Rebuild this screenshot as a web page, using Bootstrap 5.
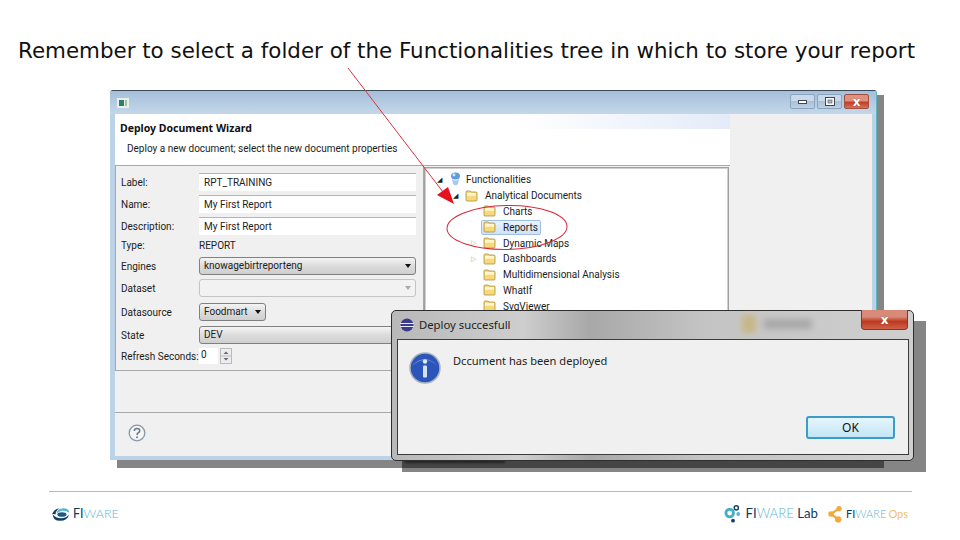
<!DOCTYPE html>
<html lang="en">
<head>
    <meta charset="UTF-8">
    <meta name="viewport" content="width=device-width, initial-scale=1.0">
    <title>Deploy report</title>
    <!-- Bootstrap 5 CSS -->
    <link href="https://cdn.jsdelivr.net/npm/bootstrap@5.3.0/dist/css/bootstrap.min.css" rel="stylesheet">
    <style>
        body {
            background: #fff;
            width: 960px;
            height: 540px;
            overflow: hidden;
            font-family: "Roboto", "Liberation Sans", sans-serif;
            font-size: 10px;
            color: #1c1c1c;
        }
        .slide-title {
            height: 90px;
            padding: 37px 0 0 18px;
            font-family: "DejaVu Sans", sans-serif;
            font-size: 21.4px;
            line-height: 28px;
            color: #111;
            white-space: nowrap;
        }
        .stage { position: relative; height: 390px; }

        /* windows on the slide */
        .win-shadow { position: absolute; background: #858585; }
        .main-shadow { left: 117px; top: 5px; width: 767px; height: 373px; }
        .dlg-shadow { left: 402px; top: 231px; width: 524px; height: 151px; background: rgba(0, 0, 0, .48); }
        .smear {
            position: absolute;
            left: 3px; bottom: 9px;
            width: 100px; height: 3px;
            background: #222;
            filter: blur(1px);
        }
        .main-win {
            position: absolute;
            left: 110px; top: 0;
            width: 767px; height: 370px;
            background: #bcd2e8;
            border-top: 1px solid #3c4a58;
            border-right: 1px solid #5cb8c0;
            border-radius: 3px 3px 0 0;
            padding: 0 4px 4px 5px;
            display: flex;
            flex-direction: column;
        }
        .win-bar {
            height: 23px;
            flex: none;
            margin: 0 -4px 0 -5px;
            padding: 3px 7px 0 7px;
            background: linear-gradient(#a4bfda, #c4d7ea);
        }
        .cap-btn {
            width: 25px; height: 15px;
            border: 1px solid #8ba5bf;
            border-radius: 2px;
            background: linear-gradient(#c7d9ea 45%, #a9c1d8 50%, #bcd0e4);
            display: flex; align-items: center; justify-content: center;
        }
        .cap-close {
            background: linear-gradient(#e2907e 45%, #c23c22 55%, #d8705c);
            border-color: #a05040;
        }
        .cap-close span, .dlg-close span {
            color: #fff;
            font: bold 12px/1 "DejaVu Sans", sans-serif;
            text-shadow: 0 0 1px #555;
        }
        .win-client { flex: 1; background: #f0f0f0; display: flex; min-height: 0; }
        .wizard { width: 615px; flex: none; display: flex; flex-direction: column; }
        .wiz-head {
            height: 52px;
            background: #fff;
            background-image: linear-gradient(90deg, #fff 65%, #e4ebf8 100%);
            background-size: 100% 15px;
            background-repeat: no-repeat;
            padding: 7px 0 0 5px;
            border-bottom: 1px solid #a8a8a8;
        }
        .wiz-head b {
            display: block;
            font-family: "Noto Sans", sans-serif;
            font-size: 10.5px;
            line-height: 14px;
            color: #111;
        }
        .wiz-head div { padding: 7px 0 0 7px; line-height: 14px; }
        .wiz-main { display: flex; height: 205px; flex: none; }
        .form-pane {
            width: 309px;
            border: 1px solid #a8a8a8;
            border-top: 0;
            padding: 5px 7px 0 5px;
            display: grid;
            grid-template-columns: 78px 1fr;
            grid-template-rows: 22px 22px 22px 16px 26px 18px 30px 16px 26px;
            align-items: center;
            white-space: nowrap;
        }
        .fld {
            height: 18px;
            background: #fff;
            border-top: 1px solid #b5b5b5;
            padding-left: 5px;
            line-height: 17px;
        }
        .drop {
            height: 18px;
            border: 1px solid #808080;
            border-radius: 3px;
            background: linear-gradient(#f4f4f4, #dcdcdc 50%, #cfcfcf);
            padding: 0 4px;
            line-height: 16px;
            display: flex; align-items: center; justify-content: space-between;
        }
        .drop i { width: 0; height: 0; margin-left: auto; border: 3.5px solid transparent; border-top: 4px solid #111; border-bottom: 0; }
        .drop-off { background: #f2f2f2; border-color: #c4c4c4; }
        .drop-off i { border-top-color: #aaa; }
        .drop-short { width: 67px; }
        .spin-val { width: 19px; height: 16px; background: #fff; padding-left: 2px; line-height: 13px; }
        .spin-btn { width: 12px; height: 16px; margin-left: 2px; display: block; }
        .tree-pane {
            width: 305px;
            margin: 1px 0 0 0;
            background: #fff;
            border: 1px solid #a0a0a0;
            outline: 1px solid #d0d0d0;
            outline-offset: -2px;
            padding: 4px 0 0 9px;
            overflow: hidden;
        }
        .tree-row { height: 15.8px; display: flex; align-items: center; gap: 4px; white-space: nowrap; }
        .tree-row .fold { margin-right: 3px; flex: none; }
        .tw { width: 8px; flex: none; font-size: 7px; line-height: 8px; color: #222; }
        .tw-closed { color: #a8a8a8; }
        .lvl0 { padding-left: 3px; }
        .lvl1 { padding-left: 19px; }
        .lvl2 { padding-left: 37px; }
        .picked {
            background: linear-gradient(#eaf3fd, #cfe2f8);
            border: 1px solid #9fbfe4;
            border-radius: 2px;
            padding: 0 2px 0 1px;
            margin-left: -2px;
            height: 15px;
            display: flex; align-items: center;
        }
        .tree-row .picked .fold { margin-right: 7px; }
        .wiz-gap { height: 42px; flex: none; border-bottom: 1px solid #a8a8a8; }
        .wiz-foot { padding: 11px 0 0 13px; }

        /* info dialog */
        .dlg {
            position: absolute;
            left: 391px; top: 220px;
            width: 523px; height: 151px;
            border: 1px solid #2e2e2e;
            border-radius: 5px;
            background: linear-gradient(90deg, #b8b8b8, #cecece 25%, #a8a8a8 38%, #c4c4c4 60%, #cfcfcf);
            padding: 0 4px 5px 5px;
            display: flex;
            flex-direction: column;
        }
        .dlg-bar {
            height: 28px;
            flex: none;
            font-family: "Noto Sans", sans-serif;
            font-size: 11.3px;
            color: #222;
            padding-left: 3px;
            gap: 5px;
            position: relative;
        }
        .dlg-close {
            position: absolute;
            right: 1px; top: -1px;
            width: 47px; height: 20px;
            border: 1px solid #7a3a30;
            border-top: 0;
            border-radius: 0 0 4px 4px;
            background: linear-gradient(#d88a78 35%, #bd3a20 60%, #cf6048);
            display: flex; align-items: center; justify-content: center;
        }
        .smudge {
            position: absolute;
            left: 345px; top: 4px;
            width: 14px; height: 18px;
            background: #c8aa50;
            opacity: .55;
            filter: blur(3px);
        }
        .smudge-text {
            position: absolute;
            left: 367px; top: 8px;
            width: 48px; height: 10px;
            background: #888;
            opacity: .5;
            filter: blur(3px);
        }
        .dlg-body {
            flex: 1;
            background: #f0f0f0;
            border: 1px solid #3c3c3c;
            position: relative;
            padding: 13px 0 0 11px;
            display: flex;
            gap: 12px;
            font-family: "Noto Sans", sans-serif;
            font-size: 11.1px;
        }
        .dlg-body svg { margin-top: -1px; }
        .dlg-ok {
            position: absolute;
            right: 13px; bottom: 15px;
            width: 89px; height: 23px;
            border: 2px solid #3c9cc8;
            border-radius: 3px;
            background: linear-gradient(#e6f5fc, #c2e6f6);
            font-size: 12px;
            line-height: 18px;
            padding: 0;
            color: #111;
        }

        /* footer */
        .foot-rule { height: 1px; margin: 11px 48px 0 49px; background: #7fcfd6; }
        .brand {
            font-family: "Lato", sans-serif;
            font-size: 12.5px;
            color: #0e3a62;
            gap: 2px;
        }
        .brand em { font-style: normal; color: #5fb4cf; font-weight: 300; }
        .brand-lab { font-size: 13.2px; gap: 4px; }
        .brand-ops { font-size: 11px; gap: 4px; }
        .brand-ops u { text-decoration: none; color: #f2c070; padding-left: 2px; }
    </style>
</head>
<body>
    <svg width="0" height="0" class="position-absolute">
        <symbol id="folder" viewBox="0 0 13 12">
            <path d="M1 3 V2 Q1 1 2 1 H5 L6 2 H11 Q12 2 12 3 V10 Q12 11 11 11 H2 Q1 11 1 10Z" fill="#f6d978" stroke="#a88f48" stroke-width=".8"/>
            <path d="M2 3 H11 V6 Q6 5 2 6Z" fill="#fff6d0"/>
        </symbol>
    </svg>

    <div class="slide-title">Remember to select a folder of the Functionalities tree in which to store your report</div>

    <div class="stage">
        <div class="win-shadow main-shadow"></div>
        <div class="main-win">
            <div class="win-bar d-flex align-items-start justify-content-between">
                <svg width="12" height="10" viewBox="0 0 12 10" class="mt-1"><rect width="12" height="10" fill="#e8efe8"/><rect x="2" y="2" width="5" height="6" fill="#2f7f68"/><rect x="8" y="2" width="2" height="6" fill="#9fc0b0"/></svg>
                <div class="d-flex" style="gap:2px">
                    <div class="cap-btn"><svg width="9" height="5"><rect x=".5" y="1.5" width="8" height="3" fill="#fff" stroke="#445"/></svg></div>
                    <div class="cap-btn"><svg width="10" height="9"><rect x=".5" y=".5" width="9" height="8" fill="#fff" stroke="#445"/><rect x="3" y="3" width="4" height="3" fill="#a9c1d8" stroke="#445" stroke-width=".6"/></svg></div>
                    <div class="cap-btn cap-close"><span>x</span></div>
                </div>
            </div>
            <div class="win-client">
                <div class="wizard">
                    <div class="wiz-head">
                        <b>Deploy Document Wizard</b>
                        <div>Deploy a new document; select the new document properties</div>
                    </div>
                    <div class="wiz-main">
                        <div class="form-pane">
                            <span>Label:</span><div class="fld">RPT_TRAINING</div>
                            <span>Name:</span><div class="fld">My First Report</div>
                            <span>Description:</span><div class="fld">My First Report</div>
                            <span>Type:</span><span>REPORT</span>
                            <span>Engines</span><div class="drop">knowagebirtreporteng<i></i></div>
                            <span>Dataset</span><div class="drop drop-off"><i></i></div>
                            <span>Datasource</span><div class="drop drop-short">Foodmart<i></i></div>
                            <span>State</span><div class="drop">DEV<i></i></div>
                            <span>Refresh Seconds:</span>
                            <div class="d-flex align-items-center"><div class="spin-val">0</div>
                                <svg class="spin-btn" viewBox="0 0 12 16"><rect x=".5" y=".5" width="11" height="15" fill="#ececec" stroke="#bbb"/><path d="M.5 8 H11.500" stroke="#bbb"/><path d="M6 3.500 L8.500 6 H3.500Z M6 12.500 L8.500 10 H3.500Z" fill="#667"/></svg>
                            </div>
                        </div>
                        <div class="tree-pane">
                            <div class="tree-row lvl0"><span class="tw">&#9698;</span>
                                <svg width="13" height="15" viewBox="0 0 13 15"><ellipse cx="6.500" cy="4" rx="4.500" ry="3.500" fill="#5b9be0"/><path d="M3 7 Q6.500 10 10 7 L9 12 Q6.500 14.500 4 12Z" fill="#a8c8ec"/><circle cx="5" cy="3" r="1.400" fill="#dcecfa"/></svg>
                                <span>Functionalities</span></div>
                            <div class="tree-row lvl1"><span class="tw">&#9698;</span><svg class="fold" width="13" height="12"><use href="#folder"/></svg><span>Analytical Documents</span></div>
                            <div class="tree-row lvl2"><span class="tw"></span><svg class="fold" width="13" height="12"><use href="#folder"/></svg><span>Charts</span></div>
                            <div class="tree-row lvl2"><span class="tw"></span><div class="picked"><svg class="fold" width="13" height="12"><use href="#folder"/></svg><span>Reports</span></div></div>
                            <div class="tree-row lvl2"><span class="tw tw-closed">&#9655;</span><svg class="fold" width="13" height="12"><use href="#folder"/></svg><span>Dynamic Maps</span></div>
                            <div class="tree-row lvl2"><span class="tw tw-closed">&#9655;</span><svg class="fold" width="13" height="12"><use href="#folder"/></svg><span>Dashboards</span></div>
                            <div class="tree-row lvl2"><span class="tw"></span><svg class="fold" width="13" height="12"><use href="#folder"/></svg><span>Multidimensional Analysis</span></div>
                            <div class="tree-row lvl2"><span class="tw"></span><svg class="fold" width="13" height="12"><use href="#folder"/></svg><span>WhatIf</span></div>
                            <div class="tree-row lvl2"><span class="tw"></span><svg class="fold" width="13" height="12"><use href="#folder"/></svg><span>SvgViewer</span></div>
                        </div>
                    </div>
                    <div class="wiz-gap"></div>
                    <div class="wiz-foot">
                        <svg width="18" height="18" viewBox="0 0 18 18"><circle cx="9" cy="9" r="7.800" fill="#f4f6f8" stroke="#8a97a6" stroke-width="1.300"/><path d="M6.300 7 Q6.300 4.500 9 4.500 Q11.800 4.500 11.800 6.800 Q11.800 8.200 10 9 Q9 9.500 9 11" fill="none" stroke="#6b7b8c" stroke-width="1.500"/><circle cx="9" cy="13.200" r="1" fill="#6b7b8c"/></svg>
                    </div>
                </div>
            </div>
        </div>

        <div class="win-shadow dlg-shadow"><div class="smear"></div></div>
        <div class="dlg">
            <div class="dlg-bar d-flex align-items-center">
                <div class="smudge"></div>
                <div class="smudge-text"></div>
                <svg width="14" height="14" viewBox="0 0 14 14"><circle cx="7" cy="7" r="6.500" fill="#3c3c8c"/><path d="M0 5.500 H14 M0 8.500 H14" stroke="#e8e8f4" stroke-width="1.200"/></svg>
                <span>Deploy succesfull</span>
                <div class="dlg-close"><span>x</span></div>
            </div>
            <div class="dlg-body">
                <svg width="32" height="32" viewBox="0 0 32 32" class="flex-none"><circle cx="16" cy="16" r="15" fill="#2b55b8" stroke="#a8b0c0" stroke-width="1.500"/><path d="M3 14 Q16 2 29 14 Q22 7 16 7 Q9 7 3 14Z" fill="#6f93dc"/><circle cx="16" cy="9.500" r="2.200" fill="#dfe8f4"/><rect x="14" y="13.500" width="4" height="12" rx="1" fill="#d8e2ee"/></svg>
                <span>Dccument has been deployed</span>
                <button type="button" class="btn dlg-ok">OK</button>
            </div>
        </div>

        <!-- red callout -->
        <svg class="position-absolute top-0 start-0 overflow-visible" width="960" height="390" viewBox="0 90 960 390">
            <path d="M348 68 L443 192" stroke="#e0303a" stroke-width="1" fill="none"/>
            <path d="M437 195 L448 187 L454 204Z" fill="#e8101c"/>
            <ellipse cx="507" cy="227.500" rx="60" ry="22" fill="none" stroke="#d82838" stroke-width="1" transform="rotate(-1 507 227)"/>
        </svg>
    </div>

    <div class="foot-rule"></div>
    <div class="d-flex justify-content-between align-items-center" style="padding:12px 52px 0 51px">
        <div class="brand d-flex align-items-center">
            <svg width="20" height="17" viewBox="0 0 22 18"><path d="M2 9 Q2 16 10 16 Q18 16 20 9 Q17 13 11 13 Q5 13 2 9Z" fill="#123d66"/><path d="M1 9 Q3 3 9 2 Q5 5 5 9 Q3 8 1 9Z" fill="#123d66"/><path d="M6 8 Q7 2 14 2 Q20 2 20 7 Q16 4 12 5 Q8 6 6 8Z" fill="#58b4cc"/><ellipse cx="12" cy="9" rx="5" ry="2.500" fill="#1c5a86"/></svg>
            <span>FI<em>WARE</em></span>
        </div>
        <div class="d-flex align-items-center" style="gap:10px">
            <div class="brand brand-lab d-flex align-items-center">
                <svg width="18" height="20" viewBox="0 0 19 20"><circle cx="6" cy="9" r="4" fill="none" stroke="#45b0c4" stroke-width="3"/><circle cx="13" cy="3.500" r="2.200" fill="none" stroke="#123d66" stroke-width="1.500"/><circle cx="15" cy="10" r="2" fill="#58b4cc"/><circle cx="9.500" cy="17" r="2" fill="#123d66"/></svg>
                <span>FI<em>WARE</em> Lab</span>
            </div>
            <div class="brand brand-ops d-flex align-items-center">
                <svg width="14" height="18" viewBox="0 0 15 20"><path d="M3 10 L12 4 M3 10 L11 16" stroke="#f2a93b" stroke-width="2.500"/><circle cx="3" cy="10" r="3" fill="#f2a93b"/><circle cx="12" cy="4" r="3" fill="#f2a93b"/><circle cx="11" cy="16" r="3.500" fill="#f2a93b"/></svg>
                <span>FI<em>WARE</em><u>Ops</u></span>
            </div>
        </div>
    </div>

    <!-- Bootstrap 5 JS -->
    <script src="https://cdn.jsdelivr.net/npm/bootstrap@5.3.0/dist/js/bootstrap.bundle.min.js"></script>
</body>
</html>
